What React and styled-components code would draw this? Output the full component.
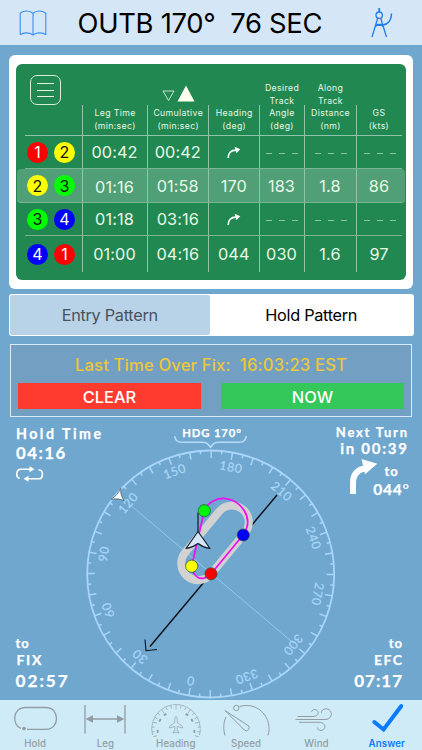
import React from 'react';
import styled, { createGlobalStyle } from 'styled-components';

const GlobalStyle = createGlobalStyle`
  * { box-sizing: border-box; }
  body {
    margin: 0;
    background: #6fa7cf;
    font-family: Inter, "Liberation Sans", sans-serif;
  }
  svg { display: block; }
`;

const Screen = styled.div`
  width: 422px;
  height: 750px;
  display: flex;
  flex-direction: column;
  background: #6fa7cf;
  overflow: hidden;
`;

const TopBar = styled.header`
  height: 45px;
  flex: none;
  display: grid;
  grid-template-columns: 66px 1fr 81px;
  align-items: center;
  background: #d5e7f6;
`;

const Title = styled.h1`
  margin: 0;
  padding-left: 11.5px;
  font-size: 27.4px;
  font-weight: 400;
  line-height: 46px;
  letter-spacing: -0.3px;
  white-space: pre;
  color: #000;
`;

const IconSlot = styled.div`
  display: flex;
  justify-content: center;
`;

const Card = styled.section`
  flex: none;
  height: 234px;
  margin: 10px 9px 0 8.5px;
  padding: 9px 7.5px 8.5px;
  background: #fff;
  border-radius: 6px;
`;

const Board = styled.div`
  height: 216px;
  padding: 0 4.5px 0 9px;
  background: #228852;
  border-radius: 6px;
  color: #e8f8e4;
`;

const columns = '57.5px 65px 61.5px 50.5px 45px 52px 45px';

const BoardHead = styled.div`
  display: grid;
  grid-template-columns: ${columns};
  height: 72px;
  width: 376.5px;
  border-bottom: 1px solid #90c4a8;
`;

const HeadCell = styled.div`
  display: flex;
  flex-direction: column;
  justify-content: ${({ $top }) => ($top ? 'flex-start' : 'flex-end')};
  align-items: ${({ $top }) => ($top ? 'flex-start' : 'center')};
  padding-bottom: 2.5px;
  font-size: 8.7px;
  line-height: 12.6px;
  letter-spacing: 0.38px;
  white-space: nowrap;
  background: ${({ $last }) => ($last ? 'none' : 'linear-gradient(#90c4a8, #90c4a8) right bottom / 1px 30px no-repeat')};
`;

const SortSlot = styled.div`
  padding-bottom: 4px;
`;

const MenuButton = styled.button`
  width: 31px;
  height: 30px;
  margin: 11px 0 0 5px;
  padding: 0;
  display: flex;
  flex-direction: column;
  align-items: center;
  justify-content: center;
  gap: 5.5px;
  background: none;
  border: 1px solid #d8eed9;
  border-radius: 7px;
`;

const MenuLine = styled.span`
  width: 17px;
  height: 1px;
  background: #e3f5e2;
`;

const Row = styled.div`
  display: grid;
  grid-template-columns: ${columns};
  height: ${({ $height }) => $height}px;
  width: ${({ $active }) => ($active ? '388px' : '376.5px')};
  margin-left: ${({ $active }) => ($active ? '-8px' : '0')};
  padding-left: ${({ $active }) => ($active ? '8px' : '0')};
  background: ${({ $active }) => ($active ? '#509f76' : 'none')};
  border-radius: ${({ $active }) => ($active ? '4px' : '0')};
  border-bottom: ${({ $last }) => ($last ? 'none' : '1px solid #78b792')};
`;

const Cell = styled.div`
  display: flex;
  align-items: center;
  justify-content: center;
  padding-top: ${({ $drop }) => $drop || 0}px;
  font-size: 16.3px;
  letter-spacing: 0.1px;
  border-right: ${({ $last }) => ($last ? 'none' : '1px solid #90c4a8')};
`;

const Legs = styled(Cell)`
  justify-content: flex-start;
  padding-left: 2px;
  gap: 6px;
`;

const Badge = styled.span`
  width: 21px;
  height: 21px;
  border-radius: 50%;
  display: flex;
  align-items: center;
  justify-content: center;
  font-size: 16px;
  letter-spacing: 0;
  background: ${({ $n }) => ['', '#ff0000', '#ffff00', '#00ff00', '#0000ff'][$n]};
  color: ${({ $n }) => ($n === 2 || $n === 3 ? '#111' : '#fff')};
`;

const Dashes = styled.span`
  display: flex;
  gap: 7px;
  padding: 2px 0 0 1px;
`;

const Dash = styled.i`
  width: 6px;
  height: 1px;
  background: #8cc49b;
`;

const Tabs = styled.div`
  flex: none;
  display: grid;
  grid-template-columns: 200.5px 1fr;
  height: 42px;
  margin: 5px 8.5px 0;
  padding: 1px;
  background: #fff;
  border-radius: 3px;
`;

const Tab = styled.button`
  border: 0;
  padding: 0;
  font: 400 16.3px Inter, "Liberation Sans", sans-serif;
  letter-spacing: -0.3px;
  background: ${({ $active }) => ($active ? '#fff' : '#b8d3e8')};
  color: ${({ $active }) => ($active ? '#000' : '#48525b')};
  border-radius: 2px;
`;

const FixPanel = styled.section`
  flex: none;
  height: 73px;
  margin: 8px 10px 0;
  padding: 9px 7px 0;
  border: 1px solid #d8ebf9;
  background: #729fc2;
`;

const FixTime = styled.div`
  height: 21px;
  text-align: center;
  white-space: pre;
  font-size: 16.6px;
  font-weight: 500;
  line-height: 22px;
  letter-spacing: 0.17px;
  color: #ecc738;
`;

const FixButtons = styled.div`
  display: grid;
  grid-template-columns: 1fr 1fr;
  gap: 20px;
  margin-top: 8px;
`;

const FixButton = styled.button`
  height: 26px;
  border: 0;
  padding: 1px 0 0;
  font: 500 16.4px Inter, "Liberation Sans", sans-serif;
  color: #fff;
  background: ${({ $color }) => $color};
`;

// compass and corner readouts share one grid cell
const Stage = styled.main`
  flex: none;
  display: grid;
  grid-template: 283px / 422px;

  > * { grid-area: 1 / 1; }
`;

const Corner = styled.div`
  display: flex;
  flex-direction: column;
  align-items: ${({ $right }) => ($right ? 'flex-end' : 'flex-start')};
  align-self: ${({ $bottom }) => ($bottom ? 'end' : 'start')};
  justify-self: ${({ $right }) => ($right ? 'end' : 'start')};
  padding: ${({ $pad }) => $pad};
  font-family: Lato, "Open Sans", sans-serif;
  font-weight: 700;
  color: #fff;
  -webkit-text-stroke: 0.25px #fff;
`;

const Readout = styled.div`
  height: ${({ $h }) => $h}px;
  line-height: ${({ $h }) => $h}px;
  font-size: ${({ $size }) => $size}px;
  letter-spacing: ${({ $ls }) => $ls}px;
  margin-right: ${({ $ls }) => -$ls}px;
  padding-left: ${({ $indent }) => $indent || 0}px;
  white-space: pre;
`;

const LoopSlot = styled.div`
  padding-top: 4px;
`;

const TurnRow = styled.div`
  display: flex;
  gap: 2px;
  margin-top: 3px;
`;

const TurnTo = styled.div`
  display: flex;
  flex-direction: column;
  align-items: center;
  margin: 0 -2px 0 -7px;
  padding-top: 3px;
`;

const Thin = styled.span`
  font-weight: 400;
`;

const TabBar = styled.nav`
  flex: none;
  height: 50px;
  display: grid;
  grid-template-columns: repeat(6, 1fr);
  background: #cfebf8;
`;

const NavItem = styled.a`
  display: flex;
  flex-direction: column;
  align-items: center;
  font-size: 9.7px;
  font-weight: ${({ $active }) => ($active ? 600 : 500)};
  line-height: 13px;
  letter-spacing: 0.1px;
  color: ${({ $active }) => ($active ? '#0a7aff' : '#929da3')};

  svg { height: 37px; flex: none; }
`;

const CompassText = styled.text`
  font-family: Lato, sans-serif;
  font-size: ${({ $size }) => $size || 12.3}px;
  font-weight: ${({ $bold }) => ($bold ? 700 : 400)};
  letter-spacing: ${({ $ls }) => $ls || 0.6}px;
  fill: ${({ $bold }) => ($bold ? '#fff' : '#a9d6f8')};
  stroke: ${({ $bold }) => ($bold ? '#fff' : '#a9d6f8')};
  stroke-width: 0.25px;
  text-anchor: middle;
`;

const rows = [
  { legs: [1, 2], cells: ['00:42', '00:42', 'turn', '-', '-', '-'], height: 33 },
  { legs: [2, 3], cells: ['01:16', '01:58', '170', '183', '1.8', '86'], height: 34, active: true },
  { legs: [3, 4], cells: ['01:18', '03:16', 'turn', '-', '-', '-'], height: 33 },
  { legs: [4, 1], cells: ['01:00', '04:16', '044', '030', '1.6', '97'], height: 36, last: true },
];

const heads = [
  ['Heading', '(deg)'],
  ['Desired', 'Track', 'Angle', '(deg)'],
  ['Along', 'Track', 'Distance', '(nm)'],
  ['GS', '(kts)'],
];

const BookIcon = () => (
  <svg width="28" height="26" viewBox="0 0 28 26" fill="none" stroke="#3b8eee" strokeWidth="1.1">
    <path d="M14 25 C11 22.5 5 22 1.2 24.5 V3.2 C5 .2 11 .3 14 3.5 C17 .3 23 .2 26.8 3.2 V24.5 C23 22 17 22.5 14 25 V3.5" strokeLinejoin="round" />
  </svg>
);

const DividersIcon = () => (
  <svg width="22" height="30" viewBox="0 0 22 30" fill="none" stroke="#1f7eea" strokeWidth="1.3">
    <path d="M8.2 0 V4" strokeWidth="1.8" />
    <circle cx="8.2" cy="7.2" r="3.2" />
    <path d="M6.8 10 L1 29 M9.6 10 L15.5 29 M4.5 18.5 L6.5 16.5 H10 L12 18.5" />
    <path d="M4.8 17.3 H11 C17 16.5 20.5 12 20.5 5.5" strokeWidth="1.5" />
  </svg>
);

const SortIcon = () => (
  <svg width="33" height="18" viewBox="162.5 84 33 18">
    <path d="M163.5 90 H174.5 L169 99.5 Z" fill="none" stroke="#d8eed9" strokeWidth=".9" />
    <path d="M186.5 84.5 L195 100.5 H178 Z" fill="#fffff0" />
  </svg>
);

const TurnIcon = () => (
  <svg width="14" height="13" viewBox="0 0 14 13">
    <path d="M1.2 12 C1 7 4 4.3 9 4.2" fill="none" stroke="#fff" strokeWidth="1.7" />
    <path d="M7.6 .8 L13.3 3.2 L9.4 7.3 Z" fill="#fff" />
  </svg>
);

const LoopIcon = () => (
  <svg width="28" height="16" viewBox="0 0 28 16" fill="none" stroke="#fff" strokeWidth="1.6">
    <path d="M3.8 12.2 C-.5 11.5 -.3 3.2 5 3.2 H14" />
    <path d="M22.5 3.8 C28 4 27.5 12.8 22.5 12.8 H11" />
    <path d="M13.5 .2 L18.5 3.2 L13.5 6.2Z M12.5 9.8 L7.5 12.8 L12.5 15.8Z" fill="#fff" stroke="none" />
  </svg>
);

const BigTurn = () => (
  <svg width="29" height="36" viewBox="0 0 29 36">
    <path d="M4 35 V24 C4 15 9 10 18 9" fill="none" stroke="#fff" strokeWidth="6" />
    <path d="M12.5 0 L28.3 4.8 L16 15.2 Z" fill="#fff" />
  </svg>
);

const C = { x: 210.7, y: 574, r: 123.5 };
const HEADING = 169.8;

const Compass = () => (
  <svg width="422" height="283" viewBox="0 417 422 283">
    <CompassText x="212" y="437" $size="11.3" $bold $ls="0.85">HDG 170°</CompassText>
    <path d="M174.7 436 C175 440 178 442.3 182 442.3 H202 C207 442.3 208 444 210.5 447.3 C213 444 214 442.3 219 442.3 H239 C243 442.3 246 440 246.2 436" fill="none" stroke="#b5dcf7" strokeWidth="1.6" />
    <circle cx={C.x} cy={C.y} r={C.r} fill="none" stroke="#a9d6f8" strokeWidth="1.8" />
    {Array.from({ length: 72 }, (_, i) => i * 5).map((deg) => (
      <path
        key={deg}
        d={`M${C.x} ${C.y - C.r} v${deg % 10 === 0 ? 7.5 : 3.5}`}
        stroke="#a9d6f8"
        strokeWidth="1.5"
        transform={`rotate(${deg - HEADING} ${C.x} ${C.y})`}
      />
    ))}
    {Array.from({ length: 12 }, (_, i) => i * 30).map((deg) => (
      <CompassText key={deg} x={C.x + 1} y={C.y - 104.5} transform={`rotate(${deg - HEADING} ${C.x} ${C.y})`}>
        {deg}
      </CompassText>
    ))}
    <path d="M131.5 506 L294 643.5" stroke="#a3cff0" strokeWidth=".8" />
    <path d="M277 495 L150 646.5" stroke="#0b0f14" strokeWidth="1.4" />
    <path d="M145 639.5 L146 650.7 L157 649.5" fill="none" stroke="#0b0f14" strokeWidth="1.1" />
    <path d="M211 574 L245 533 A16.8 16.8 0 0 0 219 511.7 L185 552.7 A16.8 16.8 0 0 0 211 574 Z" fill="none" stroke="#d2d2d3" strokeWidth="8" />
    <path d="M204.3 510.7 C208 501 219 497 228 499 C242 502 250 516 247 527 C246 531 244.5 533 243 535 L211 574 C206 579 200 580 196 576 C193 573 192 570 191.7 566 Z" fill="none" stroke="#f20cf0" strokeWidth="1.7" />
    <path d="M198 512.5 V533" stroke="#132231" strokeWidth="1.3" />
    {[[204.3, 510.7, '#00f40a'], [243.3, 535, '#0000fa'], [211, 573.8, '#fa0000'], [191.7, 566.2, '#ffff00']].map(([x, y, fill]) => (
      <circle key={fill} cx={x} cy={y} r="6.1" fill={fill} stroke="#23553c" strokeWidth=".7" />
    ))}
    <path d="M198 531.5 L210 548.5 C206 548 202 546.5 198 543.5 C194 546.5 190 548 186 548.5 Z" fill="#d5e7f6" stroke="#14202b" strokeWidth="1.2" strokeLinejoin="round" />
    <path d="M120.7 488.3 C120.3 493 121.5 497 124.2 500.8 C120 498.8 116 498.4 111.2 499.4 C115.5 496.5 118.5 493 120.7 488.3 Z" fill="#fff" stroke="#3f5666" strokeWidth=".7" />
  </svg>
);

const NavIcon = ({ name }) => {
  const grey = { fill: 'none', stroke: '#929da3', strokeWidth: 1 };
  return (
    <svg width="70" height="37" viewBox="0 0 70 37">
      {name === 'Hold' && (
        <g {...grey} strokeWidth="1.3">
          <path d="M21 28.4 C11.5 25 12.5 7.5 25.5 7.5 H46 C60 7.5 60 29.3 46 29.3 H27" />
          <circle cx="24" cy="28.6" r="1.8" fill="#929da3" stroke="none" />
        </g>
      )}
      {name === 'Leg' && (
        <g {...grey} strokeWidth="1.3">
          <path d="M15 5 V33.5 M55 5 V33.5 M20 19 H50" />
          <path d="M15.5 19 L23 15.3 V22.7Z M54.5 19 L47 15.3 V22.7Z" fill="#929da3" stroke="none" />
        </g>
      )}
      {name === 'Heading' && (
        <g {...grey} strokeWidth=".7">
          <path d="M11.5 35 A24.3 24.3 0 1 1 58.5 35" strokeDasharray="13 .8" />
          {Array.from({ length: 19 }, (_, i) => -108 + i * 12).map((a) => (
            <path key={a} d={`M35 5.5 v${a % 36 === 0 ? 4 : 2.4}`} transform={`rotate(${a} 35 29.5)`} />
          ))}
          {[-96, -60, -36, 36, 60, 96].map((a) => (
            <path key={a} d="M33.5 11 h3" transform={`rotate(${a} 35 29.5)`} strokeWidth="1.8" />
          ))}
          <path d="M35 16.5 C36.3 17 36.3 20 36.3 22.5 L41.5 26.5 V28 L36.3 26.5 L36 30.5 L38 32 V33 L35 32.3 L32 33 V32 L34 30.5 L33.7 26.5 L28.5 28 V26.5 L33.7 22.5 C33.7 20 33.7 17 35 16.5Z" />
        </g>
      )}
      {name === 'Speed' && (
        <g {...grey}>
          <circle cx="25.3" cy="8" r="2.7" />
          <path d="M28.5 6.5 C48 1 62 19 57 35.5 M15 17 C12.5 22 12 29 14 35.5" />
          <path d="M14 10.5 L37.5 25.8 A3 3 0 0 1 33.5 30.2 Z" strokeLinejoin="round" />
        </g>
      )}
      {name === 'Wind' && (
        <g {...grey}>
          <path d="M16.5 16.5 H32 C39 16.5 38 9.5 33.5 9.5 C32 9.5 31 10.3 30.7 11.8" />
          <path d="M14.5 19.5 H44 C52.5 19.5 52 8.8 45 8.8 C42 8.8 40.5 10.5 40.2 13" />
          <path d="M18 22.3 H38 C46 22.3 45 30.5 39.7 30.5 C37.8 30.5 36.7 29.3 36.5 27.5" />
        </g>
      )}
      {name === 'Answer' && <path d="M22.3 22 L31.6 29.5 L49.3 6" fill="none" stroke="#0a7aff" strokeWidth="4" strokeLinecap="round" />}
    </svg>
  );
};

const renderValue = (value) => {
  if (value === 'turn') return <TurnIcon />;
  if (value === '-') return <Dashes><Dash /><Dash /><Dash /></Dashes>;
  return value;
};

const App = () => {
  return (
    <>
      <GlobalStyle />
      <Screen>
        <TopBar>
          <IconSlot><BookIcon /></IconSlot>
          <Title>{'OUTB 170°  76 SEC'}</Title>
          <IconSlot><DividersIcon /></IconSlot>
        </TopBar>

        <Card>
          <Board>
            <BoardHead>
              <HeadCell $top>
                <MenuButton><MenuLine /><MenuLine /><MenuLine /></MenuButton>
              </HeadCell>
              <HeadCell><span>Leg Time</span><span>(min:sec)</span></HeadCell>
              <HeadCell>
                <SortSlot><SortIcon /></SortSlot>
                <span>Cumulative</span>
                <span>(min:sec)</span>
              </HeadCell>
              {heads.map((lines, i) => (
                <HeadCell key={lines[0]} $last={i === 3}>
                  {lines.map((line) => <span key={line}>{line}</span>)}
                </HeadCell>
              ))}
            </BoardHead>
            {rows.map((row) => (
              <Row key={row.legs.join()} $height={row.height} $active={row.active} $last={row.last}>
                <Legs>
                  {row.legs.map((n) => <Badge key={n} $n={n}>{n}</Badge>)}
                </Legs>
                {row.cells.map((value, i) => (
                  <Cell key={i} $last={i === 5} $drop={row.active && i === 0 ? 3 : 0}>{renderValue(value)}</Cell>
                ))}
              </Row>
            ))}
          </Board>
        </Card>

        <Tabs>
          <Tab>Entry Pattern</Tab>
          <Tab $active>Hold Pattern</Tab>
        </Tabs>

        <FixPanel>
          <FixTime>{'Last Time Over Fix:  16:03:23 EST'}</FixTime>
          <FixButtons>
            <FixButton $color="#ff3b30">CLEAR</FixButton>
            <FixButton $color="#34c759">NOW</FixButton>
          </FixButtons>
        </FixPanel>

        <Stage>
          <Compass />
          <Corner $pad="6.5px 0 0 16px">
            <Readout $h={19} $size={14.2} $ls={2.5}>Hold Time</Readout>
            <Readout $h={19} $size={16.8} $ls={1.5}>04:16</Readout>
            <LoopSlot><LoopIcon /></LoopSlot>
          </Corner>
          <Corner $right $pad="7px 15px 0 0">
            <Readout $h={17} $size={13} $ls={1.75}>Next Turn</Readout>
            <Readout $h={15} $size={15} $ls={1.75}>in 00:39</Readout>
            <TurnRow>
              <BigTurn />
              <TurnTo>
                <Readout $h={18} $size={13} $ls={1}>to</Readout>
                <Readout $h={18} $size={15.5} $ls={0.8}>044<Thin>°</Thin></Readout>
              </TurnTo>
            </TurnRow>
          </Corner>
          <Corner $bottom $pad="0 0 7px 15.5px">
            <Readout $h={16} $size={13} $ls={1}>to</Readout>
            <Readout $h={18} $size={14} $ls={1.7} $indent={1}>FIX</Readout>
            <Readout $h={24} $size={17.2} $ls={2}>02:57</Readout>
          </Corner>
          <Corner $right $bottom $pad="0 20px 7px 0">
            <Readout $h={16} $size={13} $ls={1}>to</Readout>
            <Readout $h={18} $size={14} $ls={1.4}>EFC</Readout>
            <Readout $h={24} $size={17} $ls={1}>07:17</Readout>
          </Corner>
        </Stage>

        <TabBar>
          {['Hold', 'Leg', 'Heading', 'Speed', 'Wind', 'Answer'].map((name) => (
            <NavItem key={name} $active={name === 'Answer'}>
              <NavIcon name={name} />
              {name}
            </NavItem>
          ))}
        </TabBar>
      </Screen>
    </>
  );
};

export default App;
